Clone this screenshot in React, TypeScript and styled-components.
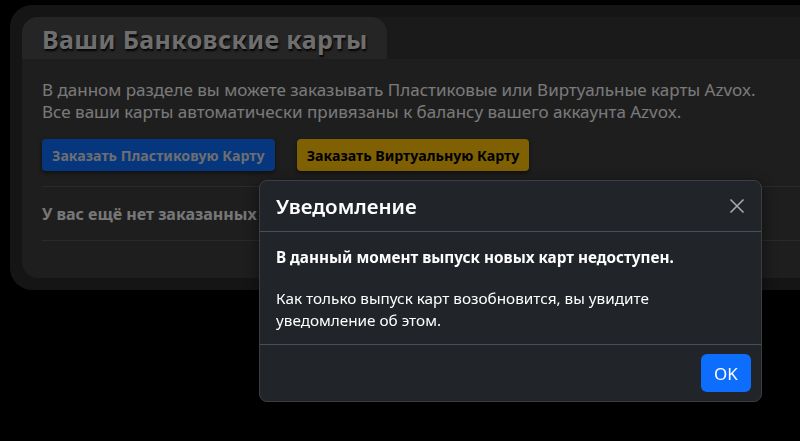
import * as React from 'react'
import styled, { createGlobalStyle } from 'styled-components'

const GlobalStyle = createGlobalStyle`
  html, body {
    margin: 0;
    padding: 0;
    background: #000;
    overflow: hidden;
    font-family: 'Noto Sans', 'Liberation Sans', sans-serif;
  }
  * { box-sizing: border-box; }
`

const App: React.FC = () => (
  <>
    <GlobalStyle />
    <Page>
      <OuterCard>
        <Panel>
          <PanelHead>
            <Tab>Ваши Банковские карты</Tab>
          </PanelHead>
          <PanelBody>
            <Intro>
              В данном разделе вы можете заказывать Пластиковые или Виртуальные карты Azvox.
              <br />
              Все ваши карты автоматически привязаны к балансу вашего аккаунта Azvox.
            </Intro>
            <Actions>
              <OrderButton variant='primary'>Заказать Пластиковую Карту</OrderButton>
              <OrderButton variant='warning'>Заказать Виртуальную Карту</OrderButton>
            </Actions>
            <EmptyRow>У вас ещё нет заказанных карт.</EmptyRow>
          </PanelBody>
        </Panel>
      </OuterCard>
    </Page>
    <Backdrop />
    <Modal>
      <ModalHeader>
        <ModalTitle>Уведомление</ModalTitle>
        <CloseButton aria-label='Закрыть'>
          <svg width='16' height='16' viewBox='0 0 16 16'>
            <path d='M1.5 1.5 L14.5 14.5 M14.5 1.5 L1.5 14.5' stroke='#a7a9ac' strokeWidth='1.6' fill='none' />
          </svg>
        </CloseButton>
      </ModalHeader>
      <ModalBody>
        <strong>В данный момент выпуск новых карт недоступен.</strong>
        <p>Как только выпуск карт возобновится, вы увидите уведомление об этом.</p>
      </ModalBody>
      <ModalFooter>
        <OkButton>OK</OkButton>
      </ModalFooter>
    </Modal>
  </>
)

export default App

const Page = styled.div`
  width: 100vw;
  height: 100vh;
  padding: 5px 0 0 10px;
`

const OuterCard = styled.div`
  width: 840px;
  padding: 12px;
  border-radius: 22px;
  background: #2a2a2a;
`

const Panel = styled.div`
  border-radius: 16px;
  overflow: hidden;
  background: #3c3c3c;
`

const PanelHead = styled.div`
  display: flex;
  background: #353535;
`

const Tab = styled.h2`
  margin: 0;
  width: 365px;
  height: 42px;
  padding: 7px 0 0 20px;
  border-radius: 0 16px 0 0;
  background: #4a4a4a;
  color: #dcdcdc;
  font-size: 25px;
  font-weight: 700;
  letter-spacing: 0.4px;
  line-height: 30px;
  text-shadow: 1px 2px 2px rgba(0, 0, 0, 0.9);
`

const PanelBody = styled.div`
  padding: 20px 20px 37px 20px;
`

const Intro = styled.p`
  margin: 0;
  color: #f2f2f2;
  font-size: 17px;
  line-height: 22px;
`

const Actions = styled.div`
  display: flex;
  gap: 22px;
  margin-top: 16px;
  padding-bottom: 15px;
  border-bottom: 1px solid #555;
`

const OrderButton = styled.button<{ variant: 'primary' | 'warning' }>`
  height: 32px;
  padding: 0 10px;
  border: none;
  border-radius: 4px;
  font-family: inherit;
  font-size: 14.2px;
  font-weight: 700;
  background: ${p => (p.variant === 'primary' ? '#0d6efd' : '#ffc107')};
  color: ${p => (p.variant === 'primary' ? '#d8dce4' : '#000')};
  box-shadow: 0 2px 4px rgba(0, 0, 0, 0.5);
`

const EmptyRow = styled.div`
  padding: 17px 0 16px;
  border-bottom: 1px solid #555;
  color: #eeeeee;
  font-size: 16px;
  font-weight: 700;
  line-height: 20px;
`

const Backdrop = styled.div`
  position: fixed;
  inset: 0;
  background: rgba(0, 0, 0, 0.5);
`

const Modal = styled.div`
  position: fixed;
  left: 259px;
  top: 180px;
  width: 503px;
  border: 1px solid #3a3d42;
  border-radius: 8px;
  background: #212529;
  color: #fff;
  box-shadow: 0 4px 16px rgba(0, 0, 0, 0.5);
`

const ModalHeader = styled.div`
  display: flex;
  align-items: center;
  justify-content: space-between;
  height: 51px;
  padding: 0 16px;
  border-bottom: 1px solid #495057;
`

const ModalTitle = styled.h5`
  margin: 0;
  font-size: 20.5px;
  font-weight: 600;
`

const CloseButton = styled.button`
  display: flex;
  padding: 0;
  border: none;
  background: none;
`

const ModalBody = styled.div`
  padding: 14px 16px 13px;
  font-size: 15.3px;
  line-height: 22px;

  strong {
    display: block;
    font-weight: 700;
  }

  p {
    margin: 19px 0 0;
  }
`

const ModalFooter = styled.div`
  display: flex;
  justify-content: flex-end;
  padding: 9px 10px 9px;
  border-top: 1px solid #495057;
`

const OkButton = styled.button`
  width: 50px;
  height: 38px;
  border: none;
  border-radius: 6px;
  background: #0d6efd;
  color: #fff;
  font-family: inherit;
  font-size: 17px;
`
